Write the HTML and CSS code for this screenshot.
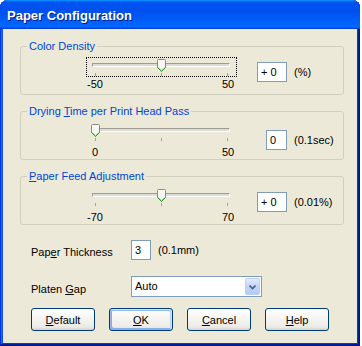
FILE: index.html
```html
<!DOCTYPE html>
<html lang="en">
  <head>
    <meta charset="UTF-8" />
    <meta name="viewport" content="width=device-width, initial-scale=1.0" />
    <title>Paper Configuration</title>
    <link rel="stylesheet" href="styles.css">
  </head>
  <body>
    <div class="window">
      <header class="titlebar">Paper Configuration</header>

      <div class="client">
        <!-- sliders -->
        <fieldset class="group group-focused">
          <legend>Color Density</legend>
          <div class="group-row">
            <div class="slider">
              <div class="slider-frame focus">
                <div class="track"></div>
                <div class="ticks"><i></i><i></i><i></i></div>
                <svg class="thumb" style="left: 70px" width="9" height="13" viewBox="0 0 9 13">
                  <path d="M0.5 8.5 V1.5 Q0.5 0.5 1.5 0.5 H7.5 Q8.5 0.5 8.5 1.5 V8.5 L4.5 12.5 Z" fill="#f6f6f2" stroke="#8a8a84" />
                  <path d="M0.5 8.5 L4.5 12.5 L8.5 8.5" fill="none" stroke="#2f9e2f" />
                  <path d="M1.5 8.5 L4.5 11.5 L7.5 8.5" fill="none" stroke="#8be08b" />
                </svg>
              </div>
              <div class="scale"><span>-50</span><span>50</span></div>
            </div>
            <div class="value">
              <div class="edit-slot"><span class="edit edit-wide">+ 0</span></div>
              <span class="unit">(%)</span>
            </div>
          </div>
        </fieldset>

        <fieldset class="group">
          <legend>Drying <u>T</u>ime per Print Head Pass</legend>
          <div class="group-row">
            <div class="slider">
              <div class="slider-frame">
                <div class="track"></div>
                <div class="ticks"><i></i><i></i><i></i></div>
                <svg class="thumb" style="left: 4px" width="9" height="13" viewBox="0 0 9 13">
                  <path d="M0.5 8.5 V1.5 Q0.5 0.5 1.5 0.5 H7.5 Q8.5 0.5 8.5 1.5 V8.5 L4.5 12.5 Z" fill="#f6f6f2" stroke="#8a8a84" />
                  <path d="M0.5 8.5 L4.5 12.5 L8.5 8.5" fill="none" stroke="#2f9e2f" />
                  <path d="M1.5 8.5 L4.5 11.5 L7.5 8.5" fill="none" stroke="#8be08b" />
                </svg>
              </div>
              <div class="scale"><span>0</span><span>50</span></div>
            </div>
            <div class="value value-low">
              <div class="edit-slot"><span class="edit edit-narrow">0</span></div>
              <span class="unit">(0.1sec)</span>
            </div>
          </div>
        </fieldset>

        <fieldset class="group">
          <legend><u>P</u>aper Feed Adjustment</legend>
          <div class="group-row">
            <div class="slider">
              <div class="slider-frame">
                <div class="track"></div>
                <div class="ticks"><i></i><i></i><i></i></div>
                <svg class="thumb" style="left: 70px" width="9" height="13" viewBox="0 0 9 13">
                  <path d="M0.5 8.5 V1.5 Q0.5 0.5 1.5 0.5 H7.5 Q8.5 0.5 8.5 1.5 V8.5 L4.5 12.5 Z" fill="#f6f6f2" stroke="#8a8a84" />
                  <path d="M0.5 8.5 L4.5 12.5 L8.5 8.5" fill="none" stroke="#2f9e2f" />
                  <path d="M1.5 8.5 L4.5 11.5 L7.5 8.5" fill="none" stroke="#8be08b" />
                </svg>
              </div>
              <div class="scale"><span>-70</span><span>70</span></div>
            </div>
            <div class="value">
              <div class="edit-slot"><span class="edit edit-wide">+ 0</span></div>
              <span class="unit">(0.01%)</span>
            </div>
          </div>
        </fieldset>

        <!-- plain fields -->
        <div class="field-row thickness-row">
          <span class="field-label">Pap<u>e</u>r Thickness</span>
          <span class="edit edit-small">3</span>
          <span class="unit">(0.1mm)</span>
        </div>

        <div class="field-row gap-row">
          <span class="field-label">Platen <u>G</u>ap</span>
          <div class="combo">
            <span class="combo-text">Auto</span>
            <span class="combo-button">
              <svg width="7" height="5" viewBox="0 0 7 5">
                <path d="M0.5 0.5 L3.5 3.5 L6.5 0.5" fill="none" stroke="#4d6185" stroke-width="1.6" />
              </svg>
            </span>
          </div>
        </div>

        <div class="buttons">
          <button class="btn"><u>D</u>efault</button>
          <button class="btn btn-default"><u>O</u>K</button>
          <button class="btn"><u>C</u>ancel</button>
          <button class="btn"><u>H</u>elp</button>
        </div>
      </div>
    </div>
  </body>
</html>
```

FILE: styles.css
```css
body {
  margin: 0;
  background: #fff;
  font-family: "Liberation Sans", Arial, sans-serif;
  font-size: 11px;
  color: #000;
}

.window {
  width: 360px;
  height: 346px;
  box-sizing: border-box;
  padding-bottom: 3px;
  display: flex;
  flex-direction: column;
  background: #0831d9;
  border-radius: 8px 8px 0 0;
  box-shadow: inset -1px -1px #00138c, inset 1px 1px #0831d9,
    inset -2px -2px #001ea0, inset 2px 2px #166aee,
    inset -3px -3px #003bda, inset 3px 3px #0855dd;
}

.titlebar {
  height: 29px;
  box-sizing: border-box;
  padding: 8px 0 0 7px;
  border-radius: 8px 8px 0 0;
  background: linear-gradient(180deg, #0997ff, #0053ee 8%, #0050ee 40%, #06f 88%, #06f 93%, #005bff 95%, #003dd7 96%, #003dd7);
  color: #fff;
  font-weight: bold;
  font-size: 13px;
  line-height: 15px;
  text-shadow: 1px 1px #0a1883;
}

.client {
  flex: 1;
  margin: 0 3px;
  padding: 11px 13px 0 17px;
  background: #ece9d8;
  display: flex;
  flex-direction: column;
}

/* group boxes */
.group {
  margin: 0 0 10px;
  padding: 0;
  min-width: 0;
  border: 1px solid #d0d0bf;
  border-radius: 3px;
}

.group legend {
  margin-left: 6px;
  padding: 0 2px;
  line-height: 13px;
  color: #0046d5;
}

.group-focused {
  padding-bottom: 3px;
}

.group-row {
  display: flex;
  align-items: flex-start;
  padding-left: 65px;
}

.slider {
  width: 151px;
}

.slider-frame {
  position: relative;
  margin-top: 4px;
  height: 20px;
  box-sizing: border-box;
  border: 1px dotted transparent;
}

.slider-frame.focus {
  border-color: #000;
}

.track {
  width: 138px;
  height: 4px;
  box-sizing: border-box;
  margin: 5px 0 0 5px;
  background: #dedcd2;
  border-top: 1px solid #9d9c97;
  border-left: 1px solid #9d9c97;
  border-bottom: 1px solid #fff;
  border-right: 1px solid #fff;
}

.ticks {
  display: flex;
  justify-content: space-between;
  width: 133px;
  height: 3px;
  margin: 6px 0 0 8px;
}

.ticks i {
  width: 1px;
  height: 3px;
  background: #a3a39d;
}

.thumb {
  position: absolute;
  top: 1px;
  display: block;
}

.scale {
  display: flex;
  justify-content: space-between;
  margin: 4px -5px 0;
  line-height: 13px;
}

.group-focused .scale {
  margin-top: 1px;
}

.scale span {
  width: 28px;
  text-align: center;
}

.value {
  display: flex;
  align-items: center;
  margin: 9px 0 0 20px;
}

.value-low {
  margin-top: 12px;
}

.edit-slot {
  width: 30px;
  display: flex;
  justify-content: flex-end;
}

.edit {
  display: block;
  height: 20px;
  box-sizing: border-box;
  padding-left: 3px;
  border: 1px solid #7f9db9;
  background: #fff;
  line-height: 18px;
}

.edit-wide {
  width: 30px;
}

.edit-narrow {
  width: 21px;
}

.edit-small {
  width: 20px;
}

.unit {
  margin-left: 7px;
  line-height: 13px;
}

/* plain fields */
.field-row {
  display: flex;
  align-items: flex-start;
  margin-left: 11px;
}

.thickness-row {
  margin-top: 5px;
}

.thickness-row .unit {
  margin-top: 4px;
}

.gap-row {
  margin-top: 16px;
}

.field-label {
  width: 100px;
  padding-top: 6px;
  line-height: 13px;
}

.gap-row .field-label {
  padding-top: 7px;
}

.combo {
  width: 131px;
  height: 21px;
  box-sizing: border-box;
  display: flex;
  align-items: center;
  border: 1px solid #7f9db9;
  background: #fff;
}

.combo-text {
  padding-left: 3px;
  line-height: 13px;
}

.combo-button {
  margin: 0 1px 0 auto;
  width: 15px;
  height: 17px;
  box-sizing: border-box;
  display: flex;
  align-items: center;
  justify-content: center;
  border: 1px solid #bccff6;
  border-radius: 2px;
  background: linear-gradient(180deg, #e3ecfe, #c3d5fc 45%, #b4cbf8);
}

.combo-button svg {
  display: block;
  margin-top: 1px;
}

/* buttons */
.buttons {
  display: flex;
  gap: 14px;
  margin: 11px 0 0 11px;
}

.btn {
  width: 64px;
  height: 23px;
  padding: 0;
  border: 1px solid #003c74;
  border-radius: 3px;
  background: linear-gradient(180deg, #fff, #ecebe6 86%, #d6d0c5);
  font-family: inherit;
  font-size: 11px;
  color: #000;
}

.btn-default {
  box-shadow: inset -1px 1px #cee7ff, inset 1px 2px #98b8ea,
    inset -2px 2px #bcd4f6, inset 1px -1px #89ade4, inset 2px -2px #89ade4;
}
```
